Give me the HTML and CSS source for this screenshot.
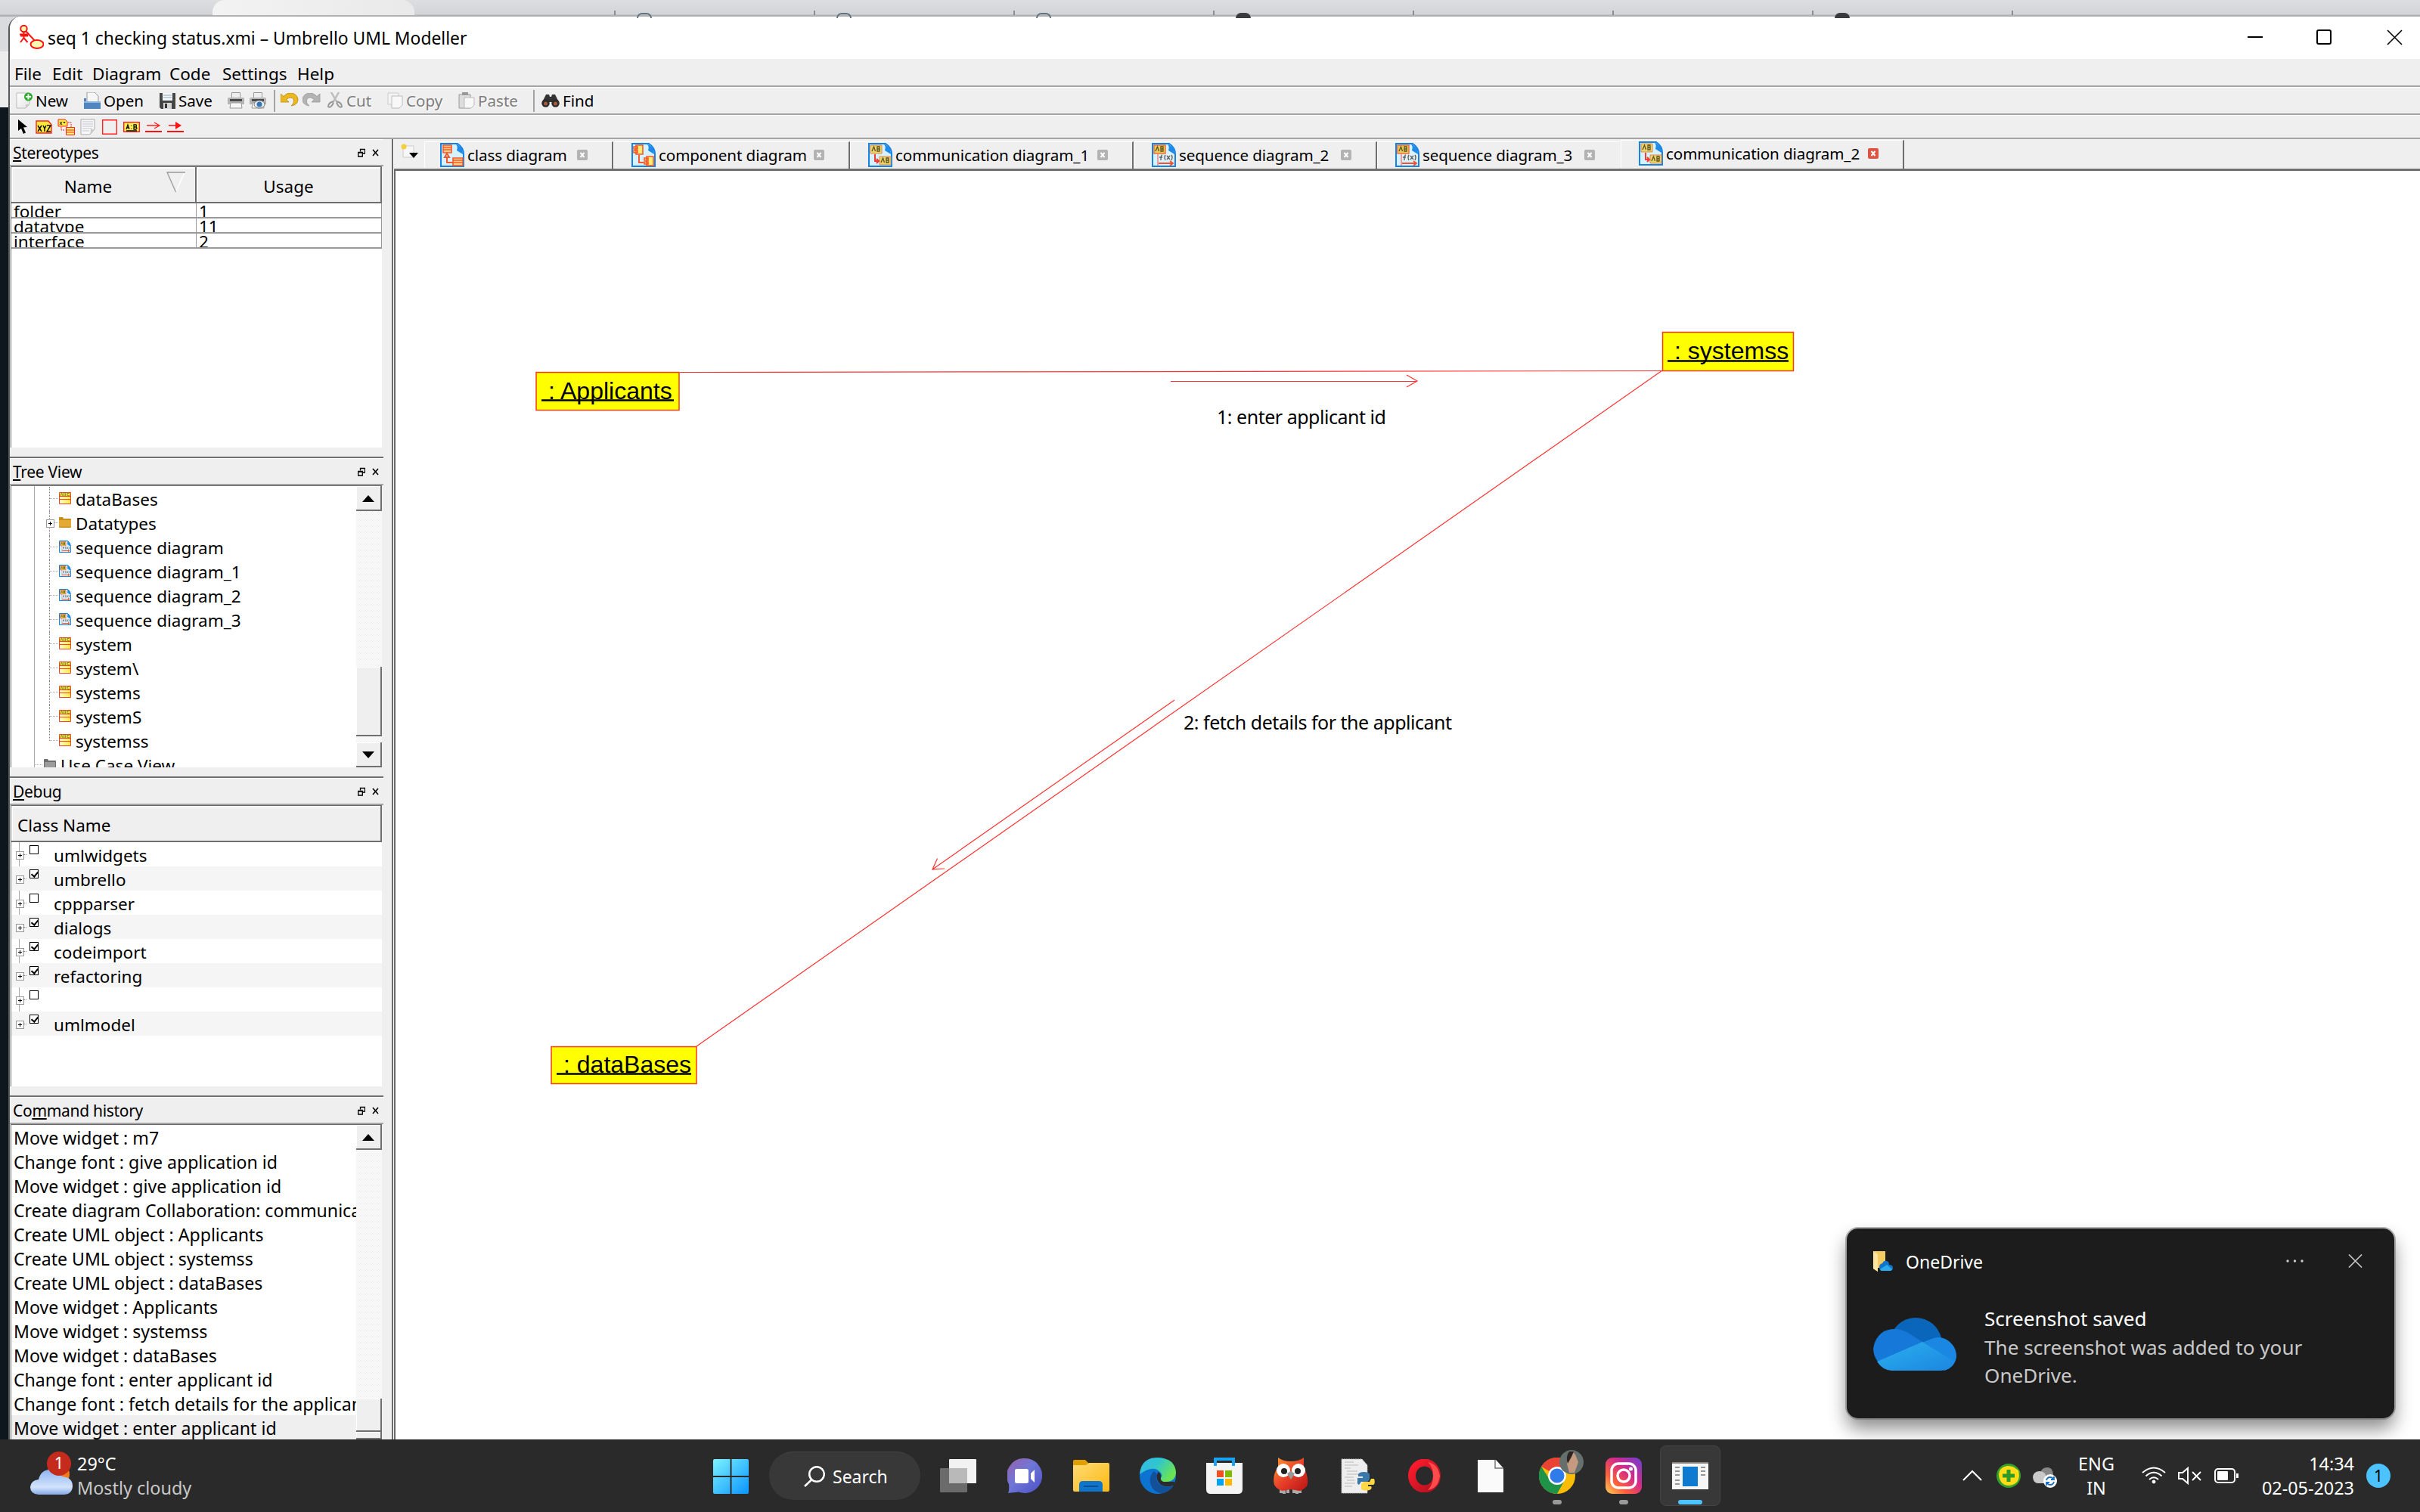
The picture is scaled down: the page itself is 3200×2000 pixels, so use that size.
FILE: index.html
```html
<!DOCTYPE html>
<html lang="en">
<head>
<meta charset="utf-8">
<title>seq 1 checking status.xmi – Umbrello UML Modeller</title>
<link rel="stylesheet" href="styles.css">
</head>
<body>
<svg class="defs" width="0" height="0">
  <defs>
    <linearGradient id="gPaper" x1="0" y1="0" x2="1" y2="1"><stop offset="0" stop-color="#fff"/><stop offset="1" stop-color="#e4e4e4"/></linearGradient>
    <linearGradient id="gWin" x1="0" y1="0" x2="1" y2="1"><stop offset="0" stop-color="#7df3ff"/><stop offset="1" stop-color="#0a94ff"/></linearGradient>
    <linearGradient id="gChat" x1="0" y1="0" x2="1" y2="1"><stop offset="0" stop-color="#9a5fa8"/><stop offset=".45" stop-color="#6f77d8"/><stop offset="1" stop-color="#4a4fc4"/></linearGradient>
    <linearGradient id="gFolder" x1="0" y1="0" x2="1" y2="1"><stop offset="0" stop-color="#ffdb75"/><stop offset="1" stop-color="#fdb913"/></linearGradient>
    <linearGradient id="gEdge" x1="0" y1="0" x2="1" y2=".5"><stop offset="0" stop-color="#35b8f0"/><stop offset=".5" stop-color="#30c6cc"/><stop offset="1" stop-color="#6be451"/></linearGradient>
    <linearGradient id="gOwl" x1="0" y1="0" x2="1" y2="1"><stop offset="0" stop-color="#ff9a2e"/><stop offset=".5" stop-color="#e8402a"/><stop offset="1" stop-color="#b81414"/></linearGradient>
    <linearGradient id="gOpera" x1="0" y1="0" x2="1" y2="1"><stop offset="0" stop-color="#ff1b2d"/><stop offset="1" stop-color="#b0121f"/></linearGradient>
    <linearGradient id="gInsta" x1="0" y1="1" x2="1" y2="0"><stop offset="0" stop-color="#ffd35a"/><stop offset=".3" stop-color="#fb5f3c"/><stop offset=".6" stop-color="#d42a8a"/><stop offset="1" stop-color="#6a40d6"/></linearGradient>
    <linearGradient id="gCloud" x1="0" y1="0" x2="0" y2="1"><stop offset="0" stop-color="#8db4f3"/><stop offset=".7" stop-color="#d3e3fb"/><stop offset="1" stop-color="#86a9ea"/></linearGradient>
    <linearGradient id="gClass" x1="0" y1="0" x2="1" y2="0"><stop offset="0" stop-color="#fffbd0"/><stop offset="1" stop-color="#ffee3c"/></linearGradient>
    <linearGradient id="gOneA" x1="0" y1="0" x2="1" y2="1"><stop offset="0" stop-color="#2cb0ee"/><stop offset="1" stop-color="#1b86e0"/></linearGradient>
  </defs>
  <symbol id="page" viewBox="0 0 32 32"><path d="M1 1h22q8 5 8 14v16H1z" fill="#d6f1ff" stroke="#1583e4" stroke-width="2"/><path d="M20 1q4 3 2 9l8 5Q31 5 20 1z" fill="#1f8ae8"/></symbol>
  <symbol id="d-class" viewBox="0 0 32 32"><use href="#page"/><g fill="#ffd08a" stroke="#f4592b" stroke-width="1.6"><path d="M4 3h11v10H4zM4 6h11M4 9h11M17 20h13v10H17zM17 23h13M17 26h13"/><path d="M9 14l3 5H6zM9 19v7h8" fill="none" stroke-width="2"/></g></symbol>
  <symbol id="d-comp" viewBox="0 0 32 32"><use href="#page"/><g fill="#ffec70" stroke="#f4592b" stroke-width="1.6"><path d="M6 3h9v12H6zM3 5h5v3H3zM3 10h5v3H3zM20 18h9v12h-9zM17 20h5v3h-5zM17 25h5v3h-5z"/><path d="M10 16v10h6" fill="none" stroke-width="2"/></g></symbol>
  <symbol id="d-comm" viewBox="0 0 32 32"><use href="#page"/><path d="M3 3h15v11H3zM15 18h15v11H15z" fill="#e9d36a" stroke="#e08a4a"/><path d="M5 11l2.500-6 2 6M12 5v6h3V8h-3 3V5zM17 26l2.500-6 2 6M24 20v6h3v-3h-3 3v-3z" fill="none" stroke="#5d5320" stroke-width="1.300"/><path d="M9 15v9h5M11 21l3 3-3 3" fill="none" stroke="#f03c32" stroke-width="2"/></symbol>
  <symbol id="d-seq" viewBox="0 0 32 32"><use href="#page"/><path d="M3 3h15v11H3z" fill="#e9c95a" stroke="#f07038" stroke-width="1.500"/><path d="M5 11l2.500-6 2 6M12 5v6h3V8h-3 3V5z" fill="none" stroke="#5d5320" stroke-width="1.300"/><path d="M8 15v15" stroke="#e9a0a0" stroke-width="2"/><path d="M9 15h21v8H9z" fill="#e6edf2"/><path d="M14 16q-2 0-2 7M10 19h4M18 16q-2 3 0 7M20 17l4 5M24 17l-4 5M26 16q2 3 0 7" fill="none" stroke="#566" stroke-width="1.400"/><path d="M9 27h18M24 24l4 3-4 3" fill="none" stroke="#f2552e" stroke-width="2"/></symbol>
  <symbol id="t-class" viewBox="0 0 16 16"><path d="M.5.5h15v15H.5z" fill="url(#gClass)" stroke="#f8432b"/><path d="M1 1h14v4H1z" fill="#e6e04a"/><path d="M2 5l1.500-4L5 5M6.500 1v4h2l.5-1-1-1 1-1-.5-1zM14 1.500h-3v3h3" fill="none" stroke="#8a7d1a" stroke-width=".8"/><path d="M0 5.500h16M0 9.500h16" stroke="#f8432b"/></symbol>
  <symbol id="t-folder" viewBox="0 0 16 16"><path d="M0 2q0-1 1-1h4l1 2h9q1 0 1 1v10q0 1-1 1H1q-1 0-1-1z" fill="#c98f1c"/><path d="M0 5h16v8.500H0z" fill="#e3aa35"/></symbol>
  <symbol id="t-gray" viewBox="0 0 16 16"><path d="M0 2q0-1 1-1h4l1 2h9q1 0 1 1v12H0z" fill="#6e6e6e"/><path d="M1 5h14v11H1z" fill="#9b9b9b"/></symbol>
  <symbol id="i-float" viewBox="0 0 10 12"><path d="M3.500 4.500v-3h6v5.500h-3M3 1.500h7" fill="none" stroke="#000" stroke-width="1.300"/><path d="M.7 5.500h5.600v5.500H.7zM.7 6h5.600" fill="none" stroke="#000" stroke-width="1.300"/></symbol>
  <symbol id="i-x" viewBox="0 0 10 10"><path d="M1 1l7 8M8 1L1 9" stroke="#000" stroke-width="1.600"/></symbol>
  <symbol id="i-close" viewBox="0 0 14 14"><rect width="14" height="14" rx="2" fill="currentColor"/><path d="M4.500 4l5 6M9.500 4l-5 6" stroke="#fff" stroke-width="2"/></symbol>
  <symbol id="i-print" viewBox="0 0 22 22"><path d="M5.500.5h11V8h-11z" fill="#eee" stroke="#999"/><path d="M2 7h18q2 0 2 2v7H0V9q0-2 2-2z" fill="#b5b5b5"/><path d="M3 9h16v3H3z" fill="#4a4a4a"/><path d="M4 14h14l1 7H3z" fill="#f7f7f7" stroke="#999"/></symbol>
</svg>

<div class="desktop">
  <div class="browser">
    <div class="browser-tab"></div>
    <div class="browser-rest"><i></i><i class="ico"></i><i class="ico"></i><i class="ico"></i><i class="ico dark"></i><i></i><i></i><i class="ico dark"></i><i></i></div>
  </div>
  <div class="window">
    <header class="titlebar">
      <svg class="app-icon" width="33" height="32" viewBox="0 0 33 32"><g fill="#fffab0" stroke="#f11" stroke-width="2"><path d="M9 8l13 14" fill="none"/><circle cx="6.500" cy="5" r="4.200"/><path d="M6.500 9v9M1 12.500h12M2 14.500h10M2 23l4.500-6 5 6" fill="none"/><ellipse cx="24" cy="25.500" rx="8.500" ry="5.500"/></g></svg>
      <span class="app-title">seq 1 checking status.xmi – Umbrello UML Modeller</span>
      <svg class="win-buttons" width="206" height="22" viewBox="0 0 206 22"><path d="M1 11h20" stroke="#000" stroke-width="2"/><rect x="93" y="2" width="18" height="18" rx="2" fill="none" stroke="#000" stroke-width="2"/><path d="M186 2l19 19M205 2l-19 19" stroke="#000" stroke-width="1.600"/></svg>
    </header>
    <nav class="menubar"><span>File</span><span>Edit</span><span>Diagram</span><span>Code</span><span>Settings</span><span>Help</span></nav>
    <div class="toolbar main-tools">
      <span class="tool"><svg width="22" height="22" viewBox="0 0 22 22"><path d="M1 1h17v15l-5 5H1z" fill="url(#gPaper)" stroke="#bbb"/><path d="M13 21v-5h5z" fill="#ccc"/><circle cx="16.500" cy="6" r="5.500" fill="#2bab2b"/><path d="M16.500 2.500v7M13 6h7" stroke="#fff" stroke-width="2"/></svg>New</span>
      <span class="tool"><svg width="22" height="22" viewBox="0 0 22 22"><path d="M4 0h10l5 5v12H4z" fill="#f6f6f6" stroke="#999"/><path d="M0 8h3v4h19v10H0z" fill="#4f86bf"/><path d="M0 13h22" stroke="#8fb8e0" stroke-width="2"/></svg>Open</span>
      <span class="tool"><svg width="21" height="22" viewBox="0 0 21 22"><path d="M0 1h21v21H2l-2-2z" fill="#454545"/><path d="M4 1h13v10H4z" fill="#f4f6f8"/><path d="M5 4h11M5 7h11" stroke="#8ab"/><path d="M5 14h11v8H5z" fill="#d5d5d5"/><path d="M7 15h3v6H7z" fill="#333"/></svg>Save</span>
      <span class="tool"><svg width="22" height="22"><use href="#i-print"/></svg></span>
      <span class="tool"><svg width="22" height="22"><use href="#i-print"/><ellipse cx="13" cy="16" rx="7" ry="5" fill="#e8eef4" stroke="#777"/><circle cx="13" cy="16" r="3.500" fill="#3377b5"/></svg></span>
      <span class="divider"></span>
      <span class="tool"><svg width="24" height="20" viewBox="0 0 24 20"><path d="M0 1v11h11L7.500 8.500Q14 4 17 8q2 5-3 9 9-1 9-9Q21 0 13 0 8 0 4 4.500z" fill="#ecb820" stroke="#b98508" stroke-width=".8"/></svg></span>
      <span class="tool"><svg width="24" height="20" viewBox="0 0 24 20"><path d="M23 1v11H12l3.500-3.500Q9 4 6 8q-2 5 3 9-9-1-9-9Q2 0 10 0q5 0 9 4.500z" fill="#b4b4b4" stroke="#999" stroke-width=".8"/></svg></span>
      <span class="tool off"><svg width="22" height="22" viewBox="0 0 22 22"><path d="M6 0l8 14M16 0L8 14" stroke="#bdbdbd" stroke-width="2.500"/><path d="M9 12q-7 2-7 7 3 3 7-5M13 12q7 2 7 7-3 3-7-5" fill="none" stroke="#999" stroke-width="2"/></svg>Cut</span>
      <span class="tool off"><svg width="21" height="22" viewBox="0 0 21 22"><path d="M1 1h14v15H1z" fill="#f4f4f4" stroke="#ccc"/><path d="M6 5h14v12l-4 4H6z" fill="#f8f8f8" stroke="#bbb"/></svg>Copy</span>
      <span class="tool off"><svg width="22" height="22" viewBox="0 0 22 22"><path d="M1 3h15v18H1z" fill="#ddd" stroke="#999"/><path d="M5 0h8v4H5z" fill="#999"/><path d="M8 7h13v10l-4 4H8z" fill="#f8f8f8" stroke="#bbb"/></svg>Paste</span>
      <span class="divider"></span>
      <span class="tool"><svg width="24" height="18" viewBox="0 0 24 18"><path d="M6 1h4l1 3h2l1-3h4l5 10H1z" fill="#333"/><circle cx="5.500" cy="12.500" r="5.200" fill="#2b2b2b"/><circle cx="18.500" cy="12.500" r="5.200" fill="#2b2b2b"/><circle cx="5.500" cy="13" r="2.500" fill="#a65a3a"/><circle cx="18.500" cy="13" r="2.500" fill="#a65a3a"/></svg>Find</span>
    </div>
    <div class="toolbar draw-tools">
      <svg width="12" height="19" viewBox="0 0 12 19"><path d="M0 0l12 10-5 .5 3 7-3 1.500-3-7-4 3z"/></svg>
      <svg width="22" height="18" viewBox="0 0 22 18"><path d="M1 1h16l4 5v11H1z" fill="#ffe93c" stroke="#f22" stroke-width="1.400"/><path d="M3 7l5 8M8 7l-5 8M10 7l2 4 2-4M12 11v4M15 7h5l-5 8h5" fill="none" stroke="#111" stroke-width="1.500"/></svg>
      <svg width="23" height="22" viewBox="0 0 23 22"><path d="M1 1h9l3 3v6H1z" fill="#ffe93c" stroke="#f22"/><path d="M3 4l3 4M6 4L3 8M8 4l1 2 1-2" stroke="#111" fill="none"/><path d="M14 5h4v6M5 11v4h5" fill="none" stroke="#f22" stroke-dasharray="2 1"/><path d="M11.500 11.500h11v10h-11zM11 15h12M11 18h12" fill="#ffee70" stroke="#f22"/></svg>
      <svg width="20" height="22" viewBox="0 0 20 22"><path d="M1 1h18v13l-6 7H1z" fill="#f8f8f8" stroke="#aaa"/><path d="M3 4h14M3 7h14M3 10h14M3 13h13M3 16h9" stroke="#c2c6d0"/><path d="M13 21l1-7h5z" fill="#ccc"/></svg>
      <svg width="20" height="20" viewBox="0 0 20 20"><path d="M.7.700h18.600v18.600H.7z" fill="none" stroke="#f22" stroke-width="1.400"/></svg>
      <svg width="22" height="14" viewBox="0 0 22 14"><path d="M.7.700h20.600v12.600H.7z" fill="#ffee55" stroke="#f22" stroke-width="1.400"/><path d="M4 10l2-6 2 6M5 8h3M11 5v1M11 9v1M14 4v6h3l1-1.500L17 7h-3 3l.5-1.500L17 4zM4 12h14" fill="none" stroke="#111" stroke-width="1.300"/></svg>
      <svg width="22" height="14" viewBox="0 0 22 14"><path d="M2 5h16M12 1l7 4-7 4" fill="none" stroke="#f22" stroke-width="1.300"/><path d="M0 13h22" stroke="#f11" stroke-width="2"/></svg>
      <svg width="22" height="14" viewBox="0 0 22 14"><path d="M2 5h10" stroke="#f11" stroke-width="1.500"/><path d="M11 0l8 5-8 5z" fill="#f11"/><path d="M0 13h22" stroke="#f11" stroke-width="2"/></svg>
    </div>

    <div class="workspace">
      <aside class="docks">
        <section class="dock dock-stereo">
          <h2><span><u>S</u>tereotypes</span><svg width="10" height="12"><use href="#i-float"/></svg><svg width="10" height="10"><use href="#i-x"/></svg></h2>
          <div class="pane">
            <div class="table">
              <div class="th">Name<svg class="sort" width="25" height="28" viewBox="0 0 25 28"><path d="M24 1L12.500 27" stroke="#fff" stroke-width="1.500"/><path d="M25 1H1l11.500 26" fill="none" stroke="#999" stroke-width="1.300"/></svg></div><div class="th">Usage</div>
              <div class="td">folder</div><div class="td">1</div>
              <div class="td">datatype</div><div class="td">11</div>
              <div class="td">interface</div><div class="td">2</div>
            </div>
          </div>
        </section>
        <section class="dock dock-tree">
          <h2><span><u>T</u>ree View</span><svg width="10" height="12"><use href="#i-float"/></svg><svg width="10" height="10"><use href="#i-x"/></svg></h2>
          <div class="pane">
            <ul class="tree">
              <li><svg><use href="#t-class"/></svg>dataBases</li>
              <li class="plus"><svg><use href="#t-folder"/></svg>Datatypes</li>
              <li><svg><use href="#d-seq"/></svg>sequence diagram</li>
              <li><svg><use href="#d-seq"/></svg>sequence diagram_1</li>
              <li><svg><use href="#d-seq"/></svg>sequence diagram_2</li>
              <li><svg><use href="#d-seq"/></svg>sequence diagram_3</li>
              <li><svg><use href="#t-class"/></svg>system</li>
              <li><svg><use href="#t-class"/></svg>system\</li>
              <li><svg><use href="#t-class"/></svg>systems</li>
              <li><svg><use href="#t-class"/></svg>systemS</li>
              <li class="last"><svg><use href="#t-class"/></svg>systemss</li>
              <li class="top"><svg><use href="#t-gray"/></svg>Use Case View</li>
            </ul>
            <div class="scroll"><b class="up"></b><b class="thumb"></b><b class="down"></b></div>
          </div>
        </section>
        <section class="dock dock-debug">
          <h2><span><u>D</u>ebug</span><svg width="10" height="12"><use href="#i-float"/></svg><svg width="10" height="10"><use href="#i-x"/></svg></h2>
          <div class="pane">
            <div class="debug">
              <div class="th left">Class Name</div>
              <ul>
                <li><i></i>umlwidgets</li>
                <li><i class="on"></i>umbrello</li>
                <li><i></i>cppparser</li>
                <li><i class="on"></i>dialogs</li>
                <li><i class="on"></i>codeimport</li>
                <li><i class="on"></i>refactoring</li>
                <li><i></i></li>
                <li><i class="on"></i>umlmodel</li>
              </ul>
            </div>
          </div>
        </section>
        <section class="dock dock-history">
          <h2><span>Co<u>m</u>mand history</span><svg width="10" height="12"><use href="#i-float"/></svg><svg width="10" height="10"><use href="#i-x"/></svg></h2>
          <div class="pane">
            <ul class="history">
              <li>Move widget : m7</li>
              <li>Change font : give application id</li>
              <li>Move widget : give application id</li>
              <li>Create diagram Collaboration: communication diagram_2</li>
              <li>Create UML object : Applicants</li>
              <li>Create UML object : systemss</li>
              <li>Create UML object : dataBases</li>
              <li>Move widget : Applicants</li>
              <li>Move widget : systemss</li>
              <li>Move widget : dataBases</li>
              <li>Change font : enter applicant id</li>
              <li>Change font : fetch details for the applicant</li>
              <li class="current">Move widget : enter applicant id</li>
            </ul>
            <div class="scroll"><b class="up"></b><b class="thumb"></b><b class="down"></b></div>
          </div>
        </section>
      </aside>

      <main class="editor">
        <div class="tabs">
          <div class="new-tab"><svg width="24" height="22" viewBox="0 0 24 22"><path d="M3 3h14v15H3z" fill="#f7f7f7" stroke="#ccc"/><circle cx="4" cy="4" r="3.500" fill="#f4cf3c"/><path d="M11 12h12l-6 7z"/></svg></div>
          <div class="tab t1"><svg width="32" height="32"><use href="#d-class"/></svg><span>class diagram</span><svg class="x" width="14" height="14"><use href="#i-close"/></svg></div>
          <div class="tab t2"><svg width="32" height="32"><use href="#d-comp"/></svg><span>component diagram</span><svg class="x" width="14" height="14"><use href="#i-close"/></svg></div>
          <div class="tab t3"><svg width="32" height="32"><use href="#d-comm"/></svg><span>communication diagram_1</span><svg class="x" width="14" height="14"><use href="#i-close"/></svg></div>
          <div class="tab t4"><svg width="32" height="32"><use href="#d-seq"/></svg><span>sequence diagram_2</span><svg class="x" width="14" height="14"><use href="#i-close"/></svg></div>
          <div class="tab t4 flat"><svg width="32" height="32"><use href="#d-seq"/></svg><span>sequence diagram_3</span><svg class="x" width="14" height="14"><use href="#i-close"/></svg></div>
          <div class="tab t3 active"><svg width="32" height="32"><use href="#d-comm"/></svg><span>communication diagram_2</span><svg class="x" width="14" height="14"><use href="#i-close"/></svg></div>
        </div>
        <div class="canvas">
        <svg width="2677" height="1678" viewBox="523 226 2677 1678">
          <g class="wires">
            <path d="M899 492.500L2198 490.500"/>
            <path d="M1548 504.500H1873M1860 496l14 8-14 8"/>
            <path d="M2198 490L921 1384"/>
            <path d="M1553 926L1233 1150M1239.500 1135.500L1233 1150l16-1"/>
          </g>
          <g class="objects">
            <rect x="709" y="492.500" width="189" height="50"/>
            <rect x="2198.500" y="439.500" width="173" height="51"/>
            <rect x="729" y="1384.500" width="192" height="49"/>
          </g>
          <path class="underline" d="M716 529.500h175M2205 477.500h160M736 1420.500h178"/>
          <g class="object-names">
            <text x="725" y="528">: Applicants</text>
            <text x="2214" y="475">: systemss</text>
            <text x="745" y="1419">: dataBases</text>
          </g>
          <g class="labels">
            <text x="1609" y="561">1: enter applicant id</text>
            <text x="1565" y="965">2: fetch details for the applicant</text>
          </g>
        </svg>
        </div>
      </main>
    </div>
  </div>

  <div class="toast">
    <div class="toast-head">
      <svg width="28" height="28" viewBox="0 0 28 28"><path d="M0 0h16v22H6v5l-6-4z" fill="#f4cb63"/><path d="M0 0l6 4v23l-6-4z" fill="#ffe6a0"/><path d="M8 21q0-4 4-5 2-4 5-3 4 0 4 5 5 0 5 4t-4 4H11q-3-1-3-5z" fill="#1275cc"/><path d="M9 24l9-6 7 6q-1 2-3 2H11q-1 0-2-2z" fill="#2cabec"/></svg>
      <span>OneDrive</span>
      <svg class="more" width="101" height="18" viewBox="0 0 101 18"><g fill="#ccc"><circle cx="2" cy="9" r="1.700"/><circle cx="11.500" cy="9" r="1.700"/><circle cx="21" cy="9" r="1.700"/></g><path d="M83 .500l17 17M100 .500l-17 17" stroke="#ccc" stroke-width="1.600"/></svg>
    </div>
    <div class="toast-body">
      <svg width="110" height="70" viewBox="0 0 110 70"><path d="M27 16Q38 0 57 0q25 2 33 26L62 38z" fill="#0a66ba"/><path d="M6 58Q-3 46 2 33 9 15 28 15q9 0 18 5l60 38L62 70z" fill="#1678d8"/><path d="M62 34l15-6q12-5 23 3 10 8 10 20-1 14-16 19z" fill="#1a88e2"/><path d="M5 58l60-26 42 26q-5 12-17 12H24Q12 69 5 58z" fill="url(#gOneA)"/></svg>
      <p><strong>Screenshot saved</strong><br>The screenshot was added to your OneDrive.</p>
    </div>
  </div>
</div>

<footer class="taskbar">
  <div class="weather">
    <svg width="56" height="60" viewBox="0 0 56 60"><circle cx="37" cy="30" r="15" fill="#f07a1c"/><path d="M11 57Q0 56 0 47q1-9 11-10Q14 24 27 24q11 0 15 9 14 1 14 13-1 11-12 11z" fill="url(#gCloud)"/><circle cx="38" cy="16" r="16" fill="#c42b1c"/><text x="38" y="23" text-anchor="middle">1</text></svg>
    <p>29°C<br><span>Mostly cloudy</span></p>
  </div>
  <div class="cell start"><svg width="47" height="46" viewBox="0 0 47 46"><path d="M0 2q0-2 2-2h20.500v22H0zM24.500 0H45q2 0 2 2v20H24.500zM0 24h22.500v22H2q-2 0-2-2zM24.500 24H47v20q0 2-2 2H24.500z" fill="url(#gWin)"/></svg></div>
  <div class="search"><svg width="28" height="28" viewBox="0 0 28 28"><circle cx="17" cy="11" r="9.800"/><path d="M10 18.500L1 27"/></svg>Search</div>
  <div class="cell"><svg width="48" height="44" viewBox="0 0 48 44"><rect x="12" width="36" height="32" rx="1" fill="#f2f2f2"/><rect y="12" width="36" height="32" rx="1" fill="#777" opacity=".85"/><path d="M12 12h24v20H12z" fill="#b9b9b9"/></svg></div>
  <div class="cell"><svg width="46" height="46" viewBox="0 0 46 46"><path d="M23 0a23 23 0 1 1-8 44.500L1 46q2-5 1-12A23 23 0 0 1 23 0z" fill="url(#gChat)"/><rect x="10" y="14" width="18" height="19" rx="2.500" fill="#fff"/><path d="M31 20l5-5v17l-5-5z" fill="#fff"/></svg></div>
  <div class="cell"><svg width="48" height="42" viewBox="0 0 48 42"><path d="M0 2q0-2 2-2h14l5 5v6H0z" fill="#e0a100"/><path d="M0 7h17l4-3h25q2 0 2 2v34q0 2-2 2H2q-2 0-2-2z" fill="url(#gFolder)"/><path d="M8 42V33q0-5 5-5h21q5 0 5 5v9z" fill="#0f75cc"/><path d="M14 35h19" stroke="#0a4f94" stroke-width="2"/></svg></div>
  <div class="cell"><svg width="48" height="48" viewBox="0 0 48 48"><circle cx="24" cy="24" r="24" fill="#0c74d0"/><path d="M0 22Q2 0 24 0q23 1 24 20-1 12-13 12-9 0-7-5 3-4-1-8-9-10-27 3z" fill="url(#gEdge)"/><path d="M19 18q-8 8-4 19 5 11 16 10 9-2 14-10-10 4-18-1-7-5-3-13z" fill="#12509a"/><path d="M24 19q5 2 4 7-1 4 3 6h15q0 4-2 5-9 3-16-1-8-6-4-17z" fill="#2b2b2b"/></svg></div>
  <div class="cell"><svg width="48" height="48" viewBox="0 0 48 48"><path d="M0 7h48v35q0 6-6 6H6q-6 0-6-6z" fill="#f4f4f4"/><path d="M12 11V2h24v9" fill="none" stroke="#18a4f2" stroke-width="4"/><path d="M14 17h9v9h-9z" fill="#f25022"/><path d="M25 17h9v9h-9z" fill="#7fba00"/><path d="M14 28h9v9h-9z" fill="#00a4ef"/><path d="M25 28h9v9h-9z" fill="#ffb900"/></svg></div>
  <div class="cell"><svg width="46" height="48" viewBox="0 0 46 48"><path d="M14 48v-6M10 47v-5M19 47v-5M27 47v-5M31 48v-6M35 47v-5" stroke="#aaa" stroke-width="4"/><path d="M6 0q6 5 17 5T40 0v12q8 18 4 26-6 6-10 6l-11-2-11 2Q4 42 1 36-2 24 6 12z" fill="url(#gOwl)"/><circle cx="13" cy="17" r="9" fill="#fff"/><circle cx="33" cy="17" r="9" fill="#fff"/><circle cx="14" cy="18" r="4" fill="#222"/><circle cx="32" cy="18" r="4" fill="#222"/><path d="M18 21l5-3 5 3-5 8z" fill="#999"/></svg></div>
  <div class="cell"><svg width="45" height="47" viewBox="0 0 45 47"><path d="M1 1h27l7 8v37H1z" fill="#eee" stroke="#bbb" stroke-dasharray="2 1"/><path d="M5 5h12M5 9h18M5 13h8M8 17h14M8 21h16M5 25h12M8 29h10M5 33h14M5 37h10" stroke="#bbb"/><path d="M22 30v-4h7v-2h-6v-3q2-3 7-3 7 0 8 3v7l-3 3h-8l-3 4q-3-1-2-5z" fill="#3b77a8"/><path d="M44 27q2 6-1 8h-7v2h4q2 3-2 5-7 2-11-1v-7l3-3h8l2-4z" fill="#ffd845"/></svg></div>
  <div class="cell"><svg width="45" height="44" viewBox="0 0 45 44"><ellipse cx="22.500" cy="22" rx="16.500" ry="17.500" fill="none" stroke="url(#gOpera)" stroke-width="10"/><path d="M27 4q13 2 16 18-2 17-16 19 7-7 7-19T27 4z" fill="#ff4b4b"/></svg></div>
  <div class="cell"><svg width="34" height="43" viewBox="0 0 34 43"><path d="M0 0h24l10 11v32H0z" fill="#fafafa"/><path d="M23 0v11h11" fill="none" stroke="#777" stroke-width="1.500"/></svg></div>
  <div class="cell run"><svg width="48" height="48" viewBox="0 0 48 48"><circle cx="24" cy="24" r="24" fill="#fbbc05"/><path d="M24 24L3.200 12A24 24 0 0 1 44.800 12z" fill="#ea4335"/><path d="M24 24L44.800 12H24z" fill="#ea4335"/><path d="M24 48A24 24 0 0 1 3.200 12L14 29l10 6z" fill="#1f9347"/><path d="M24 48l10-18-10 5-10-6z" fill="#1f9347"/><circle cx="24" cy="24" r="12" fill="#fff"/><circle cx="24" cy="24" r="9.500" fill="#2f7bea"/></svg><svg class="avatar" width="32" height="32" viewBox="0 0 32 32"><circle cx="16" cy="16" r="16" fill="#65706c"/><path d="M12 5q5-5 9 1l4 10-5 14h-7l-3-12z" fill="#c69a80"/><path d="M13 2q-5 7-2 16l5-9 3-7z" fill="#2b2422"/></svg></div>
  <div class="cell run"><svg width="48" height="48" viewBox="0 0 48 48"><rect width="48" height="48" rx="9" fill="url(#gInsta)"/><g fill="none" stroke="#fff" stroke-width="3.500"><rect x="8" y="8" width="32" height="32" rx="9"/><circle cx="24" cy="24" r="8"/></g><circle cx="33.500" cy="15" r="2.500" fill="#fff"/></svg></div>
  <div class="cell run active"><svg width="48" height="36" viewBox="0 0 48 36"><path d="M0 0h48v36H0z" fill="#f6f6f6"/><path d="M0 0h48v2H0z" fill="#8a8580"/><path d="M14 6h20v26H14z" fill="#0f7bd0"/><path d="M4 7h6M4 12h6M4 17h6M4 24h6M4 29h6M38 7h6M38 12h6M38 17h6" stroke="#777" stroke-width="1.300"/></svg></div>

  <div class="tray">
    <svg width="32" height="32" viewBox="0 0 32 32"><path d="M4 22l12-12 12 12" fill="none" stroke="#fff" stroke-width="2"/></svg>
    <svg width="32" height="32" viewBox="0 0 32 32"><circle cx="16" cy="16" r="16" fill="#35a02e"/><path d="M4 20Q0 6 14 3q8 0 12 4l3 2q4 18-12 20-8 0-11-5z" fill="#ffde17"/><path d="M16 8v16M8 16h16" stroke="#2e9a2a" stroke-width="5"/></svg>
    <svg width="32" height="32" viewBox="0 0 32 32"><path d="M10 12q2-7 9-7t8 9l-6 8z" fill="#888"/><path d="M0 18q1-8 9-8 4 0 7 3l6 13H7q-6 0-7-8z" fill="#c9c9c9"/><circle cx="23" cy="23" r="9" fill="#fff"/><path d="M18 22q1-4 5-4 3 0 4 2m1-3v4h-4M28 24q-1 4-5 4-3 0-4-2m-1 3v-4h4" fill="none" stroke="#1a70c4" stroke-width="1.800"/></svg>
    <p class="lang">ENG<br>IN</p>
    <svg width="32" height="32" viewBox="0 0 32 32" fill="none" stroke="#fff" stroke-width="2"><path d="M1 12q15-13 30 0M5.500 16.500q10.500-9.500 21 0M10 21q6-5.500 12 0"/><circle cx="16" cy="24" r="2" fill="#fff" stroke-width="1"/></svg>
    <svg width="32" height="32" viewBox="0 0 32 32" fill="none" stroke="#fff" stroke-width="2"><path d="M1 12h5l7-6v20l-7-6H1zM19 11l11 11M30 11L19 22"/></svg>
    <svg width="34" height="32" viewBox="0 0 34 32"><rect x="1" y="7" width="26" height="18" rx="4" fill="none" stroke="#fff" stroke-width="2"/><rect x="4" y="10" width="14" height="12" rx="1" fill="#fff"/><path d="M29 13h3v6h-3z" fill="#fff"/></svg>
    <p class="clock">14:34<br>02-05-2023</p>
    <span class="count">1</span>
  </div>
</footer>
</body>
</html>
```
FILE: styles.css
```css
* { box-sizing: border-box; }
body {
  margin: 0;
  width: 3200px;
  height: 2000px;
  overflow: hidden;
  font-family: "Noto Sans", "Open Sans", sans-serif;
  font-size: 22.5px;
  color: #000;
  background: #0f171e;
}
h2, p, ul { margin: 0; padding: 0; font-weight: normal; list-style: none; }
svg { display: block; flex: none; }
.defs { position: absolute; }

.desktop {
  position: relative;
  height: 1904px;
  padding-left: 11px;
  overflow: hidden;
  background: linear-gradient(#d9dbdf 0 68px, #ececec 68px 142px, #0f171e 142px);
}

/* browser tab strip behind the window */
.browser {
  display: flex;
  height: 22px;
  margin-left: -11px;
  padding-left: 281px;
  background: linear-gradient(#dcdee2, #d2d4d8 19px, #b0b1b3 20px);
}
.browser-tab { width: 267px; height: 20px; background: linear-gradient(100deg, #f3f3f3, #e9e9e9); border-radius: 16px 16px 0 0; }
.browser-rest { display: flex; align-items: flex-end; padding: 0 0 2px 264px; }
.browser-rest i { position: relative; width: 264px; height: 6px; border-left: 2px solid #8c8e92; }
.browser-rest i:first-child { width: 0; border: 0; }
.browser-rest .ico::after { content: ""; position: absolute; left: 28px; top: 3px; width: 16px; height: 5px; border: 2px solid #5f7480; border-bottom: 0; border-radius: 8px 8px 0 0; }
.browser-rest .dark::after { background: #3a3b3e; border-color: #3a3b3e; }

.window {
  display: flex;
  flex-direction: column;
  width: 3189px;
  height: 1882px;
  border-left: 2px solid #55585b;
  border-radius: 16px 0 0 0;
  overflow: hidden;
  background: #efefef;
}
.titlebar { display: flex; align-items: center; height: 56px; padding: 0 23px 0 12px; background: #fff; }
.app-icon { margin-top: -3px; }
.app-title { margin: 0 auto 0 5px; font-size: 22.85px; }
.win-buttons { margin-top: -2px; }
.menubar {
  display: grid;
  grid-template-columns: 50px 53px 102px 70px 99px auto;
  justify-content: start;
  height: 37px;
  padding-left: 6px;
  line-height: 40px;
  border-bottom: 2px solid #a4a4a4;
}
.toolbar { display: grid; align-items: center; justify-content: start; border-bottom: 2px solid #a4a4a4; border-top: 1px solid #fff; }
.main-tools { grid-template-columns: 90px 100px 90px 29px 32px 9px 29px 32px 80px 94px 99px 11px auto; height: 37px; padding-left: 8px; font-size: 20.6px; }
.tool { display: flex; align-items: center; gap: 4px; white-space: nowrap; }
.off { color: #7d7d7d; text-shadow: 1px 1px #fff; }
.divider { width: 2px; height: 29px; background: #a4a4a4; }
.draw-tools { grid-template-columns: 23px 29px 30px 29px 28px 29px 29px auto; height: 32px; padding-left: 11px; }

.workspace { display: flex; flex: 1; min-height: 0; }

/* dock column */
.docks { display: flex; flex-direction: column; width: 507px; border-right: 2px solid #6a6a6a; padding-right: 11px; }
.dock { display: flex; flex-direction: column; flex: none; }
.dock + .dock { border-top: 2px solid #6f6f6f; margin-top: 10px; }
.dock-stereo { height: 410px; }
.dock-tree { height: 413px; }
.dock-debug { height: 412px; }
.dock-history { height: 455px; }
.dock h2 { display: flex; align-items: center; height: 36px; padding: 0 5px 0 4px; border-top: 1px solid #fff; border-bottom: 2px solid #a4a4a4; font-size: 21px; letter-spacing: -.3px; }
.dock h2 span { flex: 1; }
.dock h2 svg + svg { margin-left: 9px; }
u { text-decoration-thickness: 1.500px; text-underline-offset: 2px; }
.pane { display: flex; flex: 1; min-height: 0; margin: 0 2px 2px 1px; border: 1px solid #6a6a6a; border-width: 1px 0 0 1px; background: #fff; overflow: hidden; }

.table { display: grid; grid-template-columns: 245px 245px; grid-template-rows: 48px repeat(3, 20px); width: 490px; }
.th { position: relative; background: #efefef; border: 2px solid #6f6f6f; border-width: 0 2px 2px 0; box-shadow: inset 2px 2px #fff; text-align: center; line-height: 52px; padding-right: 40px; }
.th + .th { padding-right: 0; }
.th.left { text-align: left; padding-left: 8px; height: 48px; line-height: 51px; }
.sort { position: absolute; right: 13px; top: 6px; }
.td { border: 1px solid #999; border-width: 0 1px 2px 0; padding-left: 3px; line-height: 21px; overflow: hidden; }

.tree { flex: 1; min-width: 0; padding-top: 1px; background: linear-gradient(90deg, transparent 30px, #aaa 30px 31px, transparent 31px) 0 0 / 100% 376px no-repeat; }
.tree li { position: relative; display: flex; align-items: center; height: 32px; padding-left: 63px; white-space: nowrap; }
.tree li::before { content: ""; position: absolute; left: 50px; top: 0; width: 11px; height: 100%; border-left: 1px dotted #888; background: linear-gradient(90deg, #aaa 50%, transparent 0) 0 15px / 2px 1px repeat-x; }
.tree .last::before { height: 16px; }
.tree .top::before { left: 30px; border: 0; }
.tree svg { width: 16px; height: 16px; margin: 0 6px 2px 0; }
.tree .top { padding-left: 43px; }
.plus::after, .debug li::before {
  content: "";
  position: absolute;
  left: 46px;
  top: 11px;
  width: 9px;
  height: 9px;
  border: 1px solid #999;
  background: linear-gradient(#000, #000) center / 5px 1px no-repeat, linear-gradient(#000, #000) center / 1px 5px no-repeat, #fff;
}

.scroll { display: flex; flex-direction: column; width: 34px; background: repeating-conic-gradient(#fff 0 25%, #efefef 0 50%) 0 0 / 2px 2px; }
.scroll b { display: block; height: 33px; background: #efefef; border: 2px solid #707070; border-width: 0 2px 2px 0; box-shadow: inset 1px 1px #fff; }
.up::after, .down::after { content: ""; display: block; width: 16px; height: 9px; margin: 12px 0 0 8px; background: #000; clip-path: polygon(50% 0, 100% 100%, 0 100%); }
.down::after { clip-path: polygon(0 0, 100% 0, 50% 100%); }
.dock-tree .thumb { height: 92px; margin: auto 0 8px; }
.dock-history .thumb { height: 44px; margin: auto 0 0; }
.dock-history .down { height: 10px; overflow: hidden; }
.dock-history .pane { margin-bottom: 0; }

.debug { flex: 1; }
.debug ul { background: linear-gradient(#aaa, #aaa) 10px 0 / 1px 240px no-repeat; }
.debug li { position: relative; display: flex; height: 32px; padding-left: 24px; line-height: 35px; }
.debug li:nth-child(even) { background: #f5f5f5; }
.debug li::before { left: 6px; top: 12px; }
.debug li::after { content: ""; position: absolute; left: 15px; top: 16px; width: 5px; border-top: 1px dotted #888; }
.debug i { width: 12px; height: 12px; margin: 4px 20px 0 0; border: 1px solid #000; background: #fff; }
.debug .on::after { content: ""; display: block; width: 4px; height: 7px; margin: 0 0 0 3px; border: solid #000; border-width: 0 2px 2px 0; transform: rotate(40deg); }

.history { flex: 1; min-width: 0; font-size: 23.1px; }
.history li { height: 32px; padding-left: 3px; line-height: 34px; white-space: nowrap; overflow: hidden; }
.history .current { background: #efefef; }

/* diagram editor */
.editor { flex: 1; min-width: 0; border-left: 1px solid #fff; }
.tabs { display: flex; align-items: flex-end; height: 42px; border-bottom: 3px solid #6e6e6e; font-size: 20.6px; letter-spacing: -.1px; box-shadow: inset 0 -1px #fff; }
.new-tab { width: 40px; padding: 0 0 11px 9px; }
.tab { display: flex; align-items: center; gap: 4px; height: 36px; padding: 0 32px 2px 24px; border-top: 1px solid #fff; border-right: 2px solid #6e6e6e; box-shadow: inset 1px 0 #fff; white-space: nowrap; }
.tab .x { margin-left: auto; color: #b3b3b3; }
.t1 { width: 250px; padding-left: 21px; }
.t2 { width: 313px; }
.t3 { width: 375px; }
.t4 { width: 322px; }
.flat { border-right-color: #efefef; }
.tab.active { height: 38px; padding-bottom: 4px; }
.tab.active .x { color: #dc5443; }
.canvas { border-left: 2px solid #6a6a6a; background: #fff; }
.wires { fill: none; stroke: #f33; stroke-width: 1.200; }
.objects { fill: #ff0; stroke: #f43c1c; stroke-width: 1.500; }
.underline { stroke: #000; stroke-width: 2.500; }
.object-names { font: 32px "Liberation Sans", Arial, sans-serif; }
.labels { font-size: 25px; letter-spacing: -.48px; }

/* notification */
.toast {
  position: absolute;
  left: 2442px;
  top: 1625px;
  width: 724px;
  height: 251px;
  padding: 30px 35px;
  border-radius: 15px;
  background: #1c1c1c;
  color: #fff;
  box-shadow: 0 0 0 2px rgba(110, 110, 110, .5), 0 14px 24px rgba(0, 0, 0, .45);
}
.toast-head { display: flex; align-items: center; gap: 15px; height: 28px; font-size: 23px; }
.more { margin: -2px 7px 0 auto; }
.toast-body { display: flex; gap: 37px; margin-top: 43px; font-size: 26.100px; line-height: 37.500px; color: #c9c9c9; }
.toast-body svg { margin-top: 17px; }
.toast-body p { width: 470px; }
.toast-body strong { font-weight: normal; color: #fff; }

/* taskbar */
.taskbar { display: flex; align-items: center; height: 96px; background: #2a2a2a; color: #fff; font-size: 23.400px; }
.weather { display: flex; gap: 6px; width: 922px; padding-left: 40px; line-height: 32px; }
.weather text { font-size: 22px; fill: #fff; }
.weather span { color: #c8c8c8; }
.cell { position: relative; display: flex; align-items: center; justify-content: center; width: 88px; height: 96px; }
.start { padding-top: 2px; }
.search { display: flex; align-items: center; gap: 10px; width: 200px; height: 64px; margin: 0 6px 0 7px; padding-left: 46px; border-radius: 32px; background: #383838; border-top: 1px solid #444; font-size: 23px; }
.search svg { fill: none; stroke: #fff; stroke-width: 2.500; }
.avatar { position: absolute; left: 47px; top: 14px; }
.run::after { content: ""; position: absolute; left: 38px; bottom: 10px; width: 12px; height: 6px; border-radius: 3px; background: #9a9a9a; }
.active.cell { width: 80px; height: 80px; margin: 0 4px; border: 1px solid #444; border-radius: 8px; background: #383838; }
.active.cell::after { left: 23px; bottom: 1px; width: 32px; background: #4cc2ff; }
.tray { display: grid; grid-template-columns: 48px 48px 52px 92px 48px 48px 34px 151px 48px; align-items: center; margin-left: 313px; line-height: 32px; }
.lang { width: 64px; text-align: center; }
.clock { text-align: right; }
.count { width: 32px; height: 32px; margin-left: 16px; border-radius: 50%; background: #4cc2ff; color: #000; text-align: center; font-size: 21px; }
```
